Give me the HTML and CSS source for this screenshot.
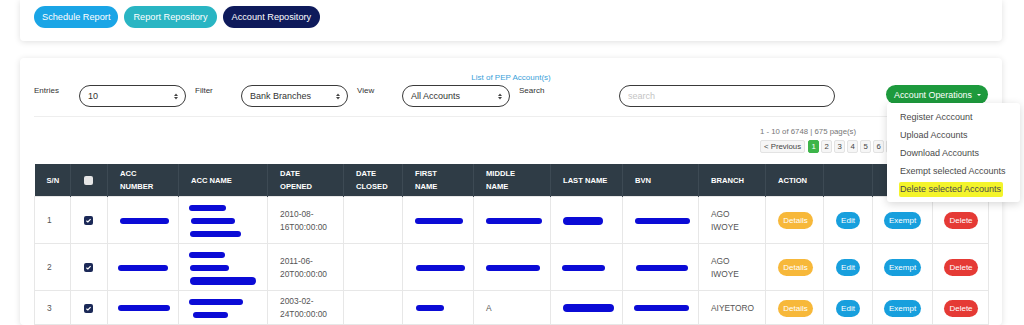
FILE: index.html
```html
<!DOCTYPE html>
<html>
<head>
<meta charset="utf-8">
<link rel="stylesheet" href="styles.css">
</head>
<body>
<div class="topcard">
  <button class="pill-btn sky">Schedule Report</button>
  <button class="pill-btn teal">Report Repository</button>
  <button class="pill-btn navy">Account Repository</button>
</div>

<div class="card">
  <div class="card-title">List of PEP Account(s)</div>
  <div class="controls">
    <span class="lbl lbl-entries">Entries</span>
    <div class="sel sel-entries"><span>10</span><svg class="arr" width="4" height="7" viewBox="0 0 4 7"><polygon points="0,3 2,0.5 4,3" /><polygon points="0,4 2,6.5 4,4" /></svg></div>
    <span class="lbl lbl-filter">Filter</span>
    <div class="sel sel-filter"><span>Bank Branches</span><svg class="arr" width="4" height="7" viewBox="0 0 4 7"><polygon points="0,3 2,0.5 4,3" /><polygon points="0,4 2,6.5 4,4" /></svg></div>
    <span class="lbl lbl-view">View</span>
    <div class="sel sel-view"><span>All Accounts</span><svg class="arr" width="4" height="7" viewBox="0 0 4 7"><polygon points="0,3 2,0.5 4,3" /><polygon points="0,4 2,6.5 4,4" /></svg></div>
    <span class="lbl lbl-search">Search</span>
    <div class="search"><span class="placeholder">search</span></div>
    <div class="ops">
      <button class="ops-btn">Account Operations <span class="caret"></span></button>
      <ul class="menu">
        <li>Register Acccount</li>
        <li>Upload Accounts</li>
        <li>Download Accounts</li>
        <li>Exempt selected Accounts</li>
        <li><span class="hl">Delete selected Accounts</span></li>
      </ul>
    </div>
  </div>
  <div class="divider"></div>
  <div class="pager">
    <div class="pager-info">1 - 10 of 6748 | 675 page(s)</div>
    <div class="pages">
      <span class="pg prev">&lt; Previous</span>
      <span class="pg active">1</span>
      <span class="pg">2</span>
      <span class="pg">3</span>
      <span class="pg">4</span>
      <span class="pg">5</span>
      <span class="pg">6</span>
      <span class="pg">7</span>
    </div>
  </div>

  <table class="grid">
    <colgroup>
      <col style="width:36px"><col style="width:37px"><col style="width:71px"><col style="width:89px">
      <col style="width:76px"><col style="width:59px"><col style="width:71px"><col style="width:77px">
      <col style="width:72px"><col style="width:76px"><col style="width:67px"><col style="width:58px">
      <col style="width:49px"><col style="width:60px"><col style="width:56px">
    </colgroup>
    <thead>
      <tr>
        <th>S/N</th>
        <th><span class="hchk"></span></th>
        <th>ACC<br>NUMBER</th>
        <th>ACC NAME</th>
        <th>DATE<br>OPENED</th>
        <th>DATE<br>CLOSED</th>
        <th>FIRST<br>NAME</th>
        <th>MIDDLE<br>NAME</th>
        <th>LAST NAME</th>
        <th>BVN</th>
        <th>BRANCH</th>
        <th>ACTION</th>
        <th></th>
        <th></th>
        <th></th>
      </tr>
    </thead>
    <tbody>
      <tr>
        <td>1</td>
        <td><svg class="chk" width="9" height="9" viewBox="0 0 9 9"><rect width="9" height="9" rx="2"/><path d="M2.4 4.7 L3.9 6 L6.6 3.1"/></svg></td>
        <td><span class="rd" style="width:49px"></span></td>
        <td>
          <div class="rl"><span class="rd" style="width:37px;margin-left:-2px"></span></div>
          <div class="rl"><span class="rd" style="width:44px"></span></div>
          <div class="rl"><span class="rd" style="width:51px;margin-left:-1px"></span></div>
        </td>
        <td>2010-08-<br>16T00:00:00</td>
        <td></td>
        <td><span class="rd" style="width:48px"></span></td>
        <td><span class="rd" style="width:56px"></span></td>
        <td><span class="rd thick" style="width:40px"></span></td>
        <td><span class="rd" style="width:55px"></span></td>
        <td>AGO<br>IWOYE</td>
        <td><span class="act details">Details</span></td>
        <td><span class="act edit">Edit</span></td>
        <td><span class="act exempt">Exempt</span></td>
        <td><span class="act delete">Delete</span></td>
      </tr>
      <tr>
        <td>2</td>
        <td><svg class="chk" width="9" height="9" viewBox="0 0 9 9"><rect width="9" height="9" rx="2"/><path d="M2.4 4.7 L3.9 6 L6.6 3.1"/></svg></td>
        <td><span class="rd" style="width:50px;margin-left:-2px"></span></td>
        <td>
          <div class="rl"><span class="rd" style="width:36px;margin-left:-2px"></span></div>
          <div class="rl"><span class="rd" style="width:39px;margin-left:-1px"></span></div>
          <div class="rl"><span class="rd thick" style="width:66px;margin-left:-1px"></span></div>
        </td>
        <td>2011-06-<br>20T00:00:00</td>
        <td></td>
        <td><span class="rd" style="width:49px;margin-left:1px"></span></td>
        <td><span class="rd" style="width:54px"></span></td>
        <td><span class="rd" style="width:43px;margin-left:-1px"></span></td>
        <td><span class="rd" style="width:52px;margin-left:1px"></span></td>
        <td>AGO<br>IWOYE</td>
        <td><span class="act details">Details</span></td>
        <td><span class="act edit">Edit</span></td>
        <td><span class="act exempt">Exempt</span></td>
        <td><span class="act delete">Delete</span></td>
      </tr>
      <tr>
        <td>3</td>
        <td><svg class="chk" width="9" height="9" viewBox="0 0 9 9"><rect width="9" height="9" rx="2"/><path d="M2.4 4.7 L3.9 6 L6.6 3.1"/></svg></td>
        <td><span class="rd" style="width:52px;margin-left:-2px"></span></td>
        <td>
          <div class="rl"><span class="rd" style="width:54px;margin-left:-2px"></span></div>
          <div class="rl"><span class="rd" style="width:35px;margin-left:2px"></span></div>
        </td>
        <td>2003-02-<br>24T00:00:00</td>
        <td></td>
        <td><span class="rd" style="width:28px;margin-left:1px"></span></td>
        <td>A</td>
        <td><span class="rd thick" style="width:51px"></span></td>
        <td><span class="rd" style="width:55px;margin-left:-1px"></span></td>
        <td>AIYETORO</td>
        <td><span class="act details">Details</span></td>
        <td><span class="act edit">Edit</span></td>
        <td><span class="act exempt">Exempt</span></td>
        <td><span class="act delete">Delete</span></td>
      </tr>
    </tbody>
  </table>
</div>
</body>
</html>
```

FILE: styles.css
```css
* { box-sizing: border-box; }

body {
  margin: 0;
  width: 1024px;
  height: 325px;
  overflow: hidden;
  background: #ffffff;
  font-family: "Liberation Sans", Arial, sans-serif;
  color: #555;
}

/* top card */
.topcard {
  margin-left: 20px;
  width: 982px;
  padding: 6px 14px 13px;
  display: flex;
  gap: 6px;
  background: #fff;
  border-radius: 0 0 4px 4px;
  box-shadow: 0 1px 6px rgba(0, 0, 0, 0.13);
}

.pill-btn {
  height: 22px;
  border: 0;
  border-radius: 11px;
  padding: 0 8px;
  font-family: "Liberation Sans", Arial, sans-serif;
  font-size: 9.2px;
  color: #fff;
}
.pill-btn.sky { background: #1aa5e6; }
.pill-btn.teal { background: #29b5c3; padding: 0 9px; }
.pill-btn.navy { background: #0e1a5b; padding: 0 9px; }

/* main card */
.card {
  margin: 17px 0 0 20px;
  width: 982px;
  padding: 15px 14px 0;
  background: #fff;
  border-radius: 4px;
  box-shadow: 0 1px 6px rgba(0, 0, 0, 0.13);
}

.card-title {
  text-align: center;
  font-size: 8px;
  line-height: 10px;
  color: #3a9fd9;
}

.controls {
  margin-top: 2px;
  display: flex;
  align-items: flex-start;
  gap: 9px;
  height: 22px;
}

.lbl {
  font-size: 8px;
  line-height: 10px;
  color: #333;
  padding-top: 1px;
}
.lbl-entries { width: 36px; }
.lbl-filter { width: 37px; }
.lbl-view { width: 36px; }
.lbl-search { width: 91px; }

.sel {
  height: 22px;
  border: 1px solid #3a3a3a;
  border-radius: 11px;
  display: flex;
  align-items: center;
  justify-content: space-between;
  padding: 0 7px 0 8px;
  font-size: 9px;
  color: #333;
}
.sel-entries { width: 107px; }
.sel-filter { width: 107px; }
.sel-view { width: 108px; }
.arr polygon { fill: #444; }

.search {
  width: 216px;
  height: 22px;
  border: 1px solid #3a3a3a;
  border-radius: 11px;
  display: flex;
  align-items: center;
  padding-left: 8px;
  font-size: 9px;
}
.placeholder { color: #c4c4c4; }

.ops {
  margin-left: auto;
  position: relative;
}

.ops-btn {
  height: 19px;
  width: 102px;
  border: 0;
  border-radius: 10px;
  background: #1d9a3d;
  color: #fff;
  font-family: "Liberation Sans", Arial, sans-serif;
  font-size: 8.9px;
  padding: 0 6px 0 8px;
  display: flex;
  align-items: center;
  gap: 5px;
}
.caret {
  width: 0;
  height: 0;
  border-left: 2px solid transparent;
  border-right: 2px solid transparent;
  border-top: 2px solid #fff;
}

.menu {
  position: absolute;
  left: 1px;
  top: 18px;
  z-index: 5;
  width: 133px;
  margin: 0;
  padding: 5px 0 4px;
  list-style: none;
  background: #fff;
  border-radius: 3px;
  box-shadow: 0 2px 8px rgba(0, 0, 0, 0.16);
}
.menu li {
  height: 18px;
  line-height: 18px;
  padding-left: 13px;
  font-size: 9px;
  color: #4a4a4a;
  white-space: nowrap;
}
.hl {
  background: #f4f42a;
  padding: 2px 2px 3px 1px;
  margin-left: -1px;
  border-radius: 2px;
}

.divider {
  margin-top: 9px;
  height: 1px;
  background: #eeeeee;
}

.pager {
  margin: 10px 0 0 726px;
}
.pager-info {
  font-size: 7.8px;
  line-height: 9px;
  color: #777;
}
.pages {
  margin-top: 4px;
  display: flex;
  gap: 2px;
}
.pg {
  height: 13px;
  min-width: 11px;
  padding: 0 2px;
  border: 1px solid #e3e3e3;
  background: #f6f6f6;
  border-radius: 2px;
  font-size: 7.8px;
  line-height: 11px;
  color: #444;
  text-align: center;
  white-space: nowrap;
}
.pg.prev { padding: 0 3px; margin-right: 1px; }
.pg.active { background: #3db54a; border-color: #3db54a; color: #fff; }

/* table */
.grid {
  margin-top: 11px;
  width: 954px;
  border-collapse: collapse;
  table-layout: fixed;
}
.grid th {
  background: #2f3c46;
  color: #fff;
  font-size: 7.6px;
  font-weight: 700;
  line-height: 13px;
  text-align: left;
  padding: 3px 6px 3px 12px;
  height: 32px;
  border-left: 1px solid #3d4a54;
  vertical-align: middle;
}
.grid th:first-child { border-left: 0; }
.hchk {
  display: block;
  width: 9px;
  height: 9px;
  border-radius: 2px;
  background: #e6e6e6;
  margin-left: 1px;
}

.grid td {
  font-size: 8.4px;
  line-height: 13px;
  color: #555;
  padding: 4px 6px 3px 12px;
  border: 1px solid #e7e7e7;
  vertical-align: middle;
}
.chk { display: block; margin-left: 1px; }
.chk rect { fill: #1b2957; }
.chk path { fill: none; stroke: #fff; stroke-width: 1.2; }

.rd {
  display: inline-block;
  height: 6px;
  border-radius: 3px;
  background: #0b0bd6;
  vertical-align: middle;
}
.rd.thick { height: 8px; border-radius: 4px; }
.rl {
  height: 13px;
  display: flex;
  align-items: center;
}

.act {
  display: inline-block;
  height: 17px;
  line-height: 17px;
  border-radius: 9px;
  padding: 0 5px;
  font-size: 8px;
  color: #fff;
  white-space: nowrap;
}
.act.details { background: #f7b83a; width: 35px; text-align: center; }
.act.edit { background: #179fdd; width: 24px; text-align: center; }
.act.exempt { background: #179fdd; width: 37px; text-align: center; margin-left: -1px; }
.act.delete { background: #e53a35; width: 34px; text-align: center; margin-left: -1px; }
```
